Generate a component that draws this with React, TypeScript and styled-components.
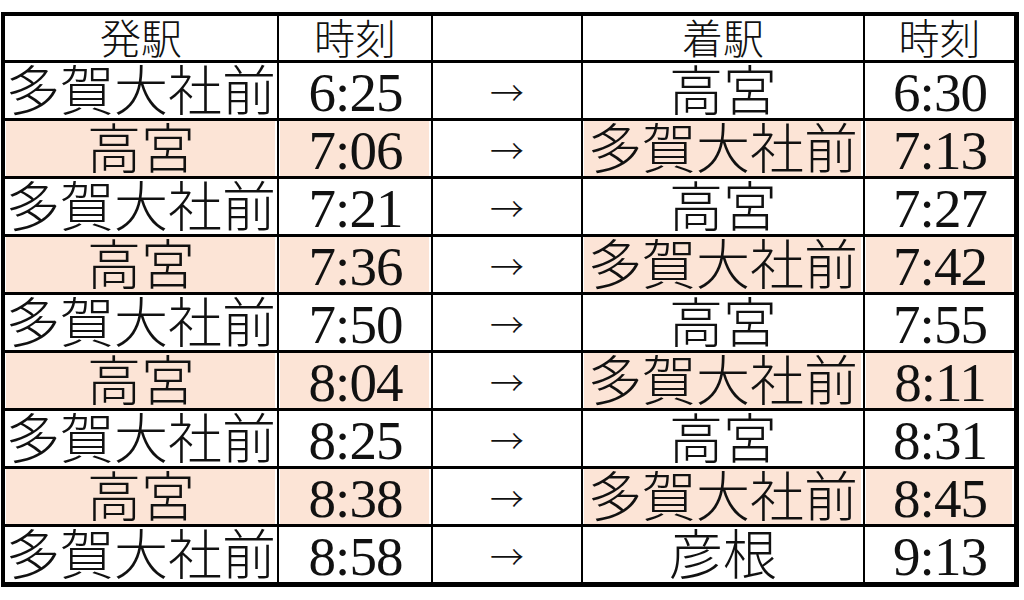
import styled, { createGlobalStyle } from "styled-components";

const GlobalStyle = createGlobalStyle`
  body {
    margin: 0;
    background: #ffffff;
  }
`;

type Trip = {
  from: string;
  dep: string;
  to: string;
  arr: string;
};

const trips: Trip[] = [
  { from: "多賀大社前", dep: "6:25", to: "高宮", arr: "6:30" },
  { from: "高宮", dep: "7:06", to: "多賀大社前", arr: "7:13" },
  { from: "多賀大社前", dep: "7:21", to: "高宮", arr: "7:27" },
  { from: "高宮", dep: "7:36", to: "多賀大社前", arr: "7:42" },
  { from: "多賀大社前", dep: "7:50", to: "高宮", arr: "7:55" },
  { from: "高宮", dep: "8:04", to: "多賀大社前", arr: "8:11" },
  { from: "多賀大社前", dep: "8:25", to: "高宮", arr: "8:31" },
  { from: "高宮", dep: "8:38", to: "多賀大社前", arr: "8:45" },
  { from: "多賀大社前", dep: "8:58", to: "彦根", arr: "9:13" },
];

const S = {
  Table: styled.div`
    margin: 12px 0 0 1px;
    width: 1018px;
    box-sizing: border-box;
    padding: 4px 5px 5px 4px;
    background: #000000;
    display: grid;
    grid-template-columns: 272px 152px 148px 280px 149px;
    grid-template-rows: 44px repeat(9, 55px);
    gap: 3px 2px;
    font-family: "Liberation Serif", "Noto Sans CJK JP", serif;
    color: #111111;
  `,
  HeadCell: styled.div`
    background: #ffffff;
    display: flex;
    align-items: center;
    justify-content: center;
    padding-top: 4px;
    font-size: 41px;
    font-weight: 300;
    line-height: 1;
  `,
  Cell: styled.div<{ $shade: boolean }>`
    background: ${(p) => (p.$shade ? "#fce4d6" : "#ffffff")};
    box-shadow: ${(p) =>
      p.$shade ? "inset 1px 0 0 #ffffff, inset -2px 0 0 #ffffff" : "none"};
    display: flex;
    align-items: center;
    justify-content: center;
    padding-top: 4px;
    line-height: 1;
    white-space: nowrap;
  `,
  Station: styled.span`
    font-size: 54px;
    font-weight: 300;
  `,
  Time: styled.span`
    font-size: 55px;
    letter-spacing: -1px;
    margin-right: -1px;
  `,
  Arrow: styled.span`
    font-family: "Noto Sans CJK JP", sans-serif;
    font-size: 34px;
    font-weight: 300;
    margin-top: -2px;
  `,
};

export default function App() {
  return (
    <>
      <GlobalStyle />
      <S.Table>
        <S.HeadCell>発駅</S.HeadCell>
        <S.HeadCell>時刻</S.HeadCell>
        <S.HeadCell />
        <S.HeadCell>着駅</S.HeadCell>
        <S.HeadCell>時刻</S.HeadCell>
        {trips.map((t, i) => {
          const shade = i % 2 === 1;
          return [
            <S.Cell key={`f${i}`} $shade={shade}>
              <S.Station>{t.from}</S.Station>
            </S.Cell>,
            <S.Cell key={`d${i}`} $shade={shade}>
              <S.Time>{t.dep}</S.Time>
            </S.Cell>,
            <S.Cell key={`a${i}`} $shade={false}>
              <S.Arrow>→</S.Arrow>
            </S.Cell>,
            <S.Cell key={`t${i}`} $shade={shade}>
              <S.Station>{t.to}</S.Station>
            </S.Cell>,
            <S.Cell key={`r${i}`} $shade={shade}>
              <S.Time>{t.arr}</S.Time>
            </S.Cell>,
          ];
        })}
      </S.Table>
    </>
  );
}
